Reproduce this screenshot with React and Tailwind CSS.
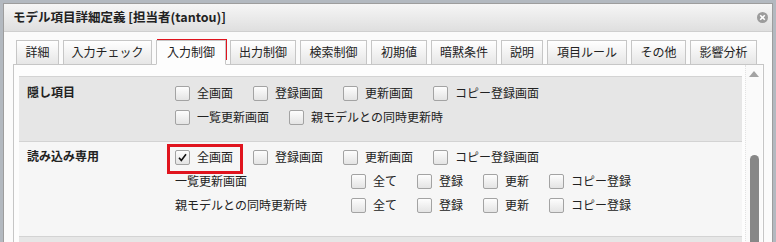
import React from 'react';

const tabs = [
    { label: '詳細', w: 'w-[43px]' },
    { label: '入力チェック', w: 'w-[89px]' },
    { label: '入力制御', w: 'w-[70px]', active: true },
    { label: '出力制御', w: 'w-[66px]' },
    { label: '検索制御', w: 'w-[67px]' },
    { label: '初期値', w: 'w-[56px]' },
    { label: '暗黙条件', w: 'w-[66px]' },
    { label: '説明', w: 'w-[42px]' },
    { label: '項目ルール', w: 'w-[80px]' },
    { label: 'その他', w: 'w-[55px]' },
    { label: '影響分析', w: 'w-[67px]' },
];

const Box = ({ checked }) => (
    <span className="w-[15px] h-[15px] shrink-0 border border-[#a3a3a3] rounded-[2px] bg-gradient-to-b from-[#fdfdfd] to-[#e4e4e4] flex items-center justify-center">
        {checked && (
            <svg width="11" height="11" viewBox="0 0 11 11">
                <path d="M2 5.8 L4.3 8.4 L9 2.2" fill="none" stroke="#111" strokeWidth="1.6" />
            </svg>
        )}
    </span>
);

const Check = ({ label, checked }) => (
    <div className="flex items-center gap-[7px] mr-[20px]">
        <Box checked={checked} />
        <span>{label}</span>
    </div>
);

const SubRow = ({ label }) => (
    <div className="h-[24px] flex items-center">
        <span className="w-[176px]">{label}</span>
        <Check label="全て" />
        <Check label="登録" />
        <Check label="更新" />
        <Check label="コピー登録" />
    </div>
);

export default function App() {
    return (
        <div className="relative w-[776px] h-[242px] overflow-hidden bg-[#b3b9c0] pl-[3px] pt-[3px] text-[12px] text-[#222] font-['Noto_Sans_CJK_JP','Noto_Sans',sans-serif]">
            <div className="w-[770px] h-[270px] bg-[#fbfbfb] border border-[#9d9d9d]">
                {/* Title bar */}
                <div className="h-[28px] border-b border-[#cfcfcf] bg-gradient-to-b from-[#f6f6f6] to-[#dfdfdf] flex items-center justify-between pl-[9px] pr-[4px]">
                    <span className="font-bold text-[12.5px] leading-none">モデル項目詳細定義 [担当者(tantou)]</span>
                    <span className="w-[11px] h-[11px] rounded-full bg-[#9c9c9c] flex items-center justify-center">
                        <svg width="7" height="7" viewBox="0 0 7 7">
                            <path d="M1.2 1.2 L5.8 5.8 M5.8 1.2 L1.2 5.8" stroke="#fff" strokeWidth="1.6" />
                        </svg>
                    </span>
                </div>

                {/* Tabs */}
                <div className="pt-[8px]">
                    <div className="flex gap-[4px] pl-[12px] h-[25px] relative z-10 -mb-px">
                        {tabs.map((t) => (
                            <div
                                key={t.label}
                                className={`${t.w} flex items-center justify-center pb-[2px] border border-[#c6c6c6] ${t.active ? 'bg-[#fdfdfd] border-b-[#fdfdfd]' : 'bg-gradient-to-b from-[#ffffff] to-[#e6e6e6]'}`}
                            >
                                {t.label}
                            </div>
                        ))}
                    </div>

                    {/* Panel */}
                    <div className="ml-[9px] mr-[8px] border border-[#c6c6c6] bg-[#fdfdfd] flex h-[200px]">
                        <div className="pl-[5px] pt-[11px] w-[728px]">
                            {/* 隠し項目 */}
                            <div className="border-t border-[#d3d3d3] bg-[#e6e6e6] pt-[4px] pb-[12px] flex">
                                <div className="w-[156px] pl-[8px] h-[22px] flex items-center font-bold">隠し項目</div>
                                <div>
                                    <div className="h-[24px] flex items-center">
                                        <Check label="全画面" />
                                        <Check label="登録画面" />
                                        <Check label="更新画面" />
                                        <Check label="コピー登録画面" />
                                    </div>
                                    <div className="h-[24px] flex items-center">
                                        <Check label="一覧更新画面" />
                                        <Check label="親モデルとの同時更新時" />
                                    </div>
                                </div>
                            </div>

                            {/* 読み込み専用 */}
                            <div className="border-t border-[#d3d3d3] bg-[#f6f6f6] pt-[3px] pb-[19px] flex">
                                <div className="w-[156px] pl-[8px] h-[22px] flex items-center font-bold">読み込み専用</div>
                                <div>
                                    <div className="h-[24px] flex items-center">
                                        <Check label="全画面" checked />
                                        <Check label="登録画面" />
                                        <Check label="更新画面" />
                                        <Check label="コピー登録画面" />
                                    </div>
                                    <SubRow label="一覧更新画面" />
                                    <SubRow label="親モデルとの同時更新時" />
                                </div>
                            </div>

                            <div className="border-t border-[#d3d3d3] bg-[#e6e6e6] h-[30px]" />
                        </div>

                        {/* Scrollbar */}
                        <div className="ml-[3px] w-[17px] bg-[#fafafa] border-l border-dotted border-[#e2e2e2] flex flex-col items-center pt-[6px]">
                            <svg width="10" height="6" viewBox="0 0 10 6">
                                <path d="M0 6 L5 0 L10 6 Z" fill="#a3a3a3" />
                            </svg>
                            <div className="mt-[78px] w-[9px] flex-1 rounded-t-full bg-[#878787]" />
                        </div>
                    </div>
                </div>
            </div>

            {/* Red highlight annotations */}
            <div className="absolute left-[157px] top-[39px] w-[70px] h-[21px] border-[3px] border-[#e0141e]" />
            <div className="absolute left-[167px] top-[144px] w-[76px] h-[30px] border-[3px] border-[#e0141e]" />
        </div>
    );
}
